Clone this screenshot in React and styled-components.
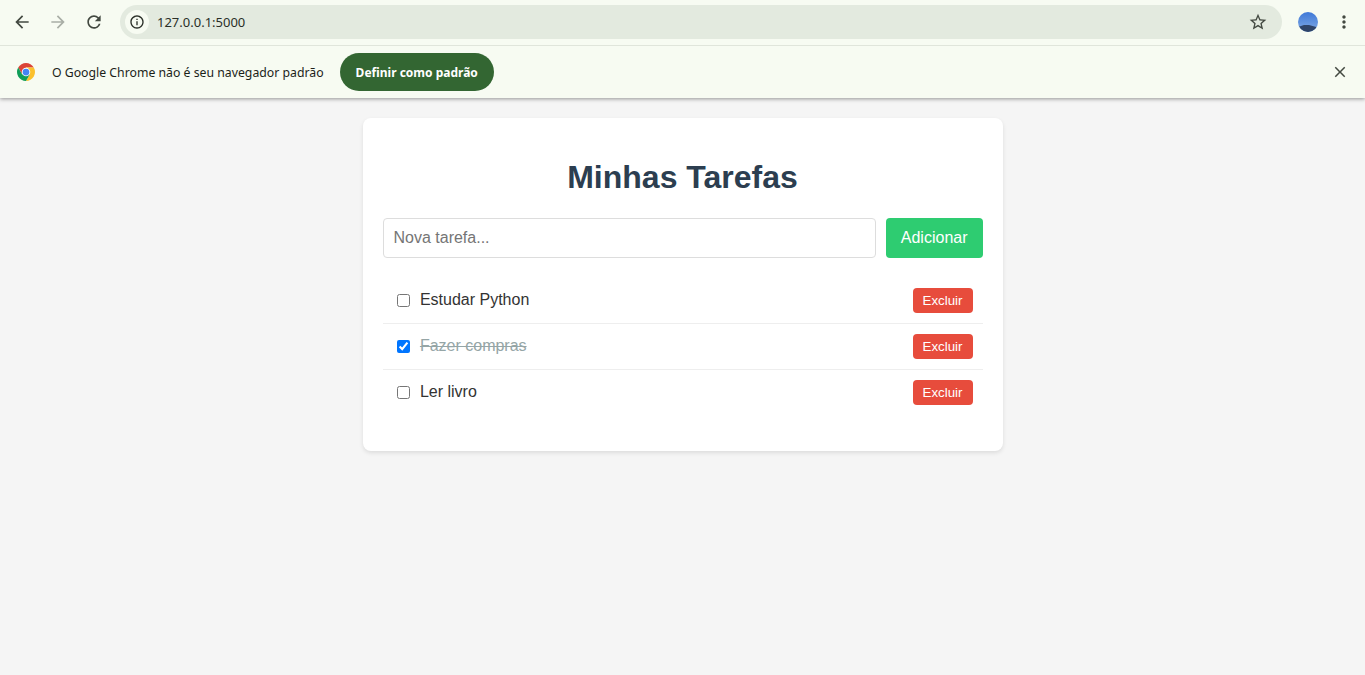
import React, { useState } from 'react'
import styled, { createGlobalStyle } from 'styled-components'

const GlobalStyle = createGlobalStyle`
  html, body {
    margin: 0;
    padding: 0;
    background-color: #f5f5f5;
    font-family: 'Liberation Sans', Arial, sans-serif;
  }
  * {
    box-sizing: border-box;
  }
`

const Page = styled.div`
  min-height: 675px;
  overflow: hidden;
`

const BrowserBar = styled.header`
  background-color: #f7fbf2;
  box-shadow: 0 1px 4px rgba(0, 0, 0, 0.4);
  position: relative;
`

const Toolbar = styled.div`
  display: flex;
  align-items: center;
  height: 46px;
  padding: 0 3px 1px 4px;
  border-bottom: 1px solid #e0e5db;
`

const NavIcon = styled.button`
  display: flex;
  align-items: center;
  justify-content: center;
  flex: none;
  width: 36px;
  height: 34px;
  padding: 0;
  border: none;
  background: none;
  color: ${p => (p.$disabled ? '#a9aea6' : '#434941')};
`

const AddressBar = styled.div`
  display: flex;
  align-items: center;
  flex: 1;
  height: 34px;
  margin: 0 16px 0 8px;
  padding: 0 14px 0 5px;
  border-radius: 17px;
  background-color: #e3eadf;
`

const InfoChip = styled.span`
  display: flex;
  align-items: center;
  justify-content: center;
  width: 24px;
  height: 24px;
  border-radius: 50%;
  background-color: #f7fbf2;
  color: #2a2f28;
`

const Url = styled.span`
  flex: 1;
  margin-left: 8px;
  font-family: 'Noto Sans', sans-serif;
  font-size: 13px;
  color: #2a2f28;
`

const StarIcon = styled.span`
  display: flex;
  color: #434941;
`

const Avatar = styled.span`
  display: block;
  flex: none;
  width: 20px;
  height: 20px;
  margin: 0 8px 0 0;
`

const InfoBar = styled.div`
  display: flex;
  align-items: center;
  height: 52px;
  padding: 0 16px 0 17px;
`

const InfoText = styled.span`
  margin-left: 17px;
  font-family: 'Noto Sans', sans-serif;
  font-size: 12.27px;
  color: #1c1f1a;
`

const DefaultButton = styled.button`
  height: 38px;
  margin-left: 16px;
  padding: 0 16px;
  border: none;
  border-radius: 19px;
  background-color: #336632;
  color: #ffffff;
  font-family: 'Noto Sans', sans-serif;
  font-size: 12px;
  font-weight: 700;
`

const CloseButton = styled.span`
  display: flex;
  margin-left: auto;
  color: #434941;
`

const Card = styled.main`
  width: 640px;
  margin: 20px auto 0;
  padding: 20px;
  border-radius: 8px;
  background-color: #ffffff;
  box-shadow: 0 2px 4px rgba(0, 0, 0, 0.1);
`

const Title = styled.h1`
  margin: 21px 0 22px;
  font-size: 32px;
  line-height: 37px;
  font-weight: 700;
  text-align: center;
  color: #2c3e50;
`

const TaskForm = styled.form`
  display: flex;
  gap: 10px;
  margin-bottom: 20px;
`

const TaskInput = styled.input`
  flex: 1;
  height: 40px;
  padding: 10px;
  border: 1px solid #dddddd;
  border-radius: 4px;
  font-family: 'Liberation Sans', Arial, sans-serif;
  font-size: 16px;
  &::placeholder {
    color: #757575;
  }
`

const AddButton = styled.button`
  height: 40px;
  padding: 10px 15px;
  border: none;
  border-radius: 4px;
  background-color: #2ecc71;
  color: #ffffff;
  font-family: 'Liberation Sans', Arial, sans-serif;
  font-size: 16px;
`

const TaskList = styled.ul`
  list-style: none;
  margin: 0 0 16px;
  padding: 0;
`

const TaskRow = styled.li`
  display: flex;
  align-items: center;
  padding: 10px;
  border-bottom: ${p => (p.$last ? 'none' : '1px solid #eeeeee')};
`

const TaskCheck = styled.input`
  width: 13px;
  height: 13px;
  margin: 0 10.4px 0 4px;
`

const TaskText = styled.span`
  flex: 1;
  padding-bottom: 2px;
  font-size: 16px;
  color: ${p => (p.$done ? '#95a5a6' : '#333333')};
  text-decoration: ${p => (p.$done ? 'line-through' : 'none')};
`

const DeleteButton = styled.button`
  height: 25px;
  padding: 5px 10px;
  border: none;
  border-radius: 4px;
  background-color: #e74c3c;
  color: #ffffff;
  font-family: 'Liberation Sans', Arial, sans-serif;
  font-size: 13.33px;
`

function MaterialIcon({ d, size = 20 }) {
  return (
    <svg width={size} height={size} viewBox="0 0 24 24" fill="currentColor">
      <path d={d} />
    </svg>
  )
}

const icons = {
  back: 'M20 11H7.83l5.59-5.59L12 4l-8 8 8 8 1.41-1.41L7.83 13H20v-2z',
  forward: 'M4 11h12.17l-5.59-5.59L12 4l8 8-8 8-1.41-1.41L16.17 13H4v-2z',
  reload: 'M17.65 6.35A7.958 7.958 0 0 0 12 4c-4.42 0-7.99 3.58-7.99 8s3.57 8 7.99 8c3.73 0 6.84-2.55 7.73-6h-2.08A5.99 5.99 0 0 1 12 18c-3.31 0-6-2.69-6-6s2.69-6 6-6c1.66 0 3.14.69 4.22 1.78L13 11h7V4l-2.35 2.35z',
  info: 'M11 7h2v2h-2V7zm0 4h2v6h-2v-6zm1-9C6.48 2 2 6.48 2 12s4.48 10 10 10 10-4.48 10-10S17.52 2 12 2zm0 18c-4.41 0-8-3.59-8-8s3.59-8 8-8 8 3.59 8 8-3.59 8-8 8z',
  star: 'M22 9.24l-7.19-.62L12 2 9.19 8.63 2 9.24l5.46 4.73L5.82 21 12 17.27 18.18 21l-1.63-7.03L22 9.24zM12 15.4l-3.76 2.27 1-4.28-3.32-2.88 4.38-.38L12 6.1l1.71 4.04 4.38.38-3.32 2.88 1 4.28L12 15.4z',
  dots: 'M12 8c1.1 0 2-.9 2-2s-.9-2-2-2-2 .9-2 2 .9 2 2 2zm0 2c-1.1 0-2 .9-2 2s.9 2 2 2 2-.9 2-2-.9-2-2-2zm0 6c-1.1 0-2 .9-2 2s.9 2 2 2 2-.9 2-2-.9-2-2-2z',
  close: 'M19 6.41L17.59 5 12 10.59 6.41 5 5 6.41 10.59 12 5 17.59 6.41 19 12 13.41 17.59 19 19 17.59 13.41 12z',
}

function ChromeLogo() {
  return (
    <svg width="18" height="18" viewBox="4 4 40 40">
      <path fill="#db4437" d="M6.68 14A20 20 0 0 1 41.32 14H24L15.34 29z" />
      <path fill="#fbc02d" d="M41.32 14A20 20 0 0 1 24 44L32.66 29 24 14z" />
      <path fill="#0f9d58" d="M24 44A20 20 0 0 1 6.68 14L15.34 29H32.66z" />
      <circle cx="24" cy="24" r="9.5" fill="#ffffff" />
      <circle cx="24" cy="24" r="7.5" fill="#4285f4" />
    </svg>
  )
}

function ProfilePicture() {
  return (
    <svg width="20" height="20" viewBox="0 0 20 20">
      <defs>
        <clipPath id="avatar-clip">
          <circle cx="10" cy="10" r="10" />
        </clipPath>
        <linearGradient id="avatar-sky" x1="0" y1="0" x2="0" y2="1">
          <stop offset="0" stopColor="#3f78d8" />
          <stop offset="0.7" stopColor="#6d9be0" />
        </linearGradient>
      </defs>
      <g clipPath="url(#avatar-clip)">
        <rect width="20" height="20" fill="url(#avatar-sky)" />
        <path fill="#2f4468" d="M0 15 6 13 11 13 20 15.5V20H0z" />
      </g>
    </svg>
  )
}

const initialTasks = [
  { id: 1, text: 'Estudar Python', done: false },
  { id: 2, text: 'Fazer compras', done: true },
  { id: 3, text: 'Ler livro', done: false },
]

export default function App() {
  const [tasks, setTasks] = useState(initialTasks)

  function toggleTask(id) {
    setTasks(tasks.map(t => (t.id === id ? { ...t, done: !t.done } : t)))
  }

  return (
    <Page>
      <GlobalStyle />
      <BrowserBar>
        <Toolbar>
          <NavIcon><MaterialIcon d={icons.back} /></NavIcon>
          <NavIcon $disabled><MaterialIcon d={icons.forward} /></NavIcon>
          <NavIcon><MaterialIcon d={icons.reload} /></NavIcon>
          <AddressBar>
            <InfoChip><MaterialIcon d={icons.info} size={16} /></InfoChip>
            <Url>127.0.0.1:5000</Url>
            <StarIcon><MaterialIcon d={icons.star} /></StarIcon>
          </AddressBar>
          <Avatar><ProfilePicture /></Avatar>
          <NavIcon><MaterialIcon d={icons.dots} /></NavIcon>
        </Toolbar>
        <InfoBar>
          <ChromeLogo />
          <InfoText>O Google Chrome não é seu navegador padrão</InfoText>
          <DefaultButton>Definir como padrão</DefaultButton>
          <CloseButton><MaterialIcon d={icons.close} size={18} /></CloseButton>
        </InfoBar>
      </BrowserBar>
      <Card>
        <Title>Minhas Tarefas</Title>
        <TaskForm onSubmit={e => e.preventDefault()}>
          <TaskInput placeholder="Nova tarefa..." />
          <AddButton>Adicionar</AddButton>
        </TaskForm>
        <TaskList>
          {tasks.map((task, i) => (
            <TaskRow key={task.id} $last={i === tasks.length - 1}>
              <TaskCheck type="checkbox" checked={task.done} onChange={() => toggleTask(task.id)} />
              <TaskText $done={task.done}>{task.text}</TaskText>
              <DeleteButton>Excluir</DeleteButton>
            </TaskRow>
          ))}
        </TaskList>
      </Card>
    </Page>
  )
}
